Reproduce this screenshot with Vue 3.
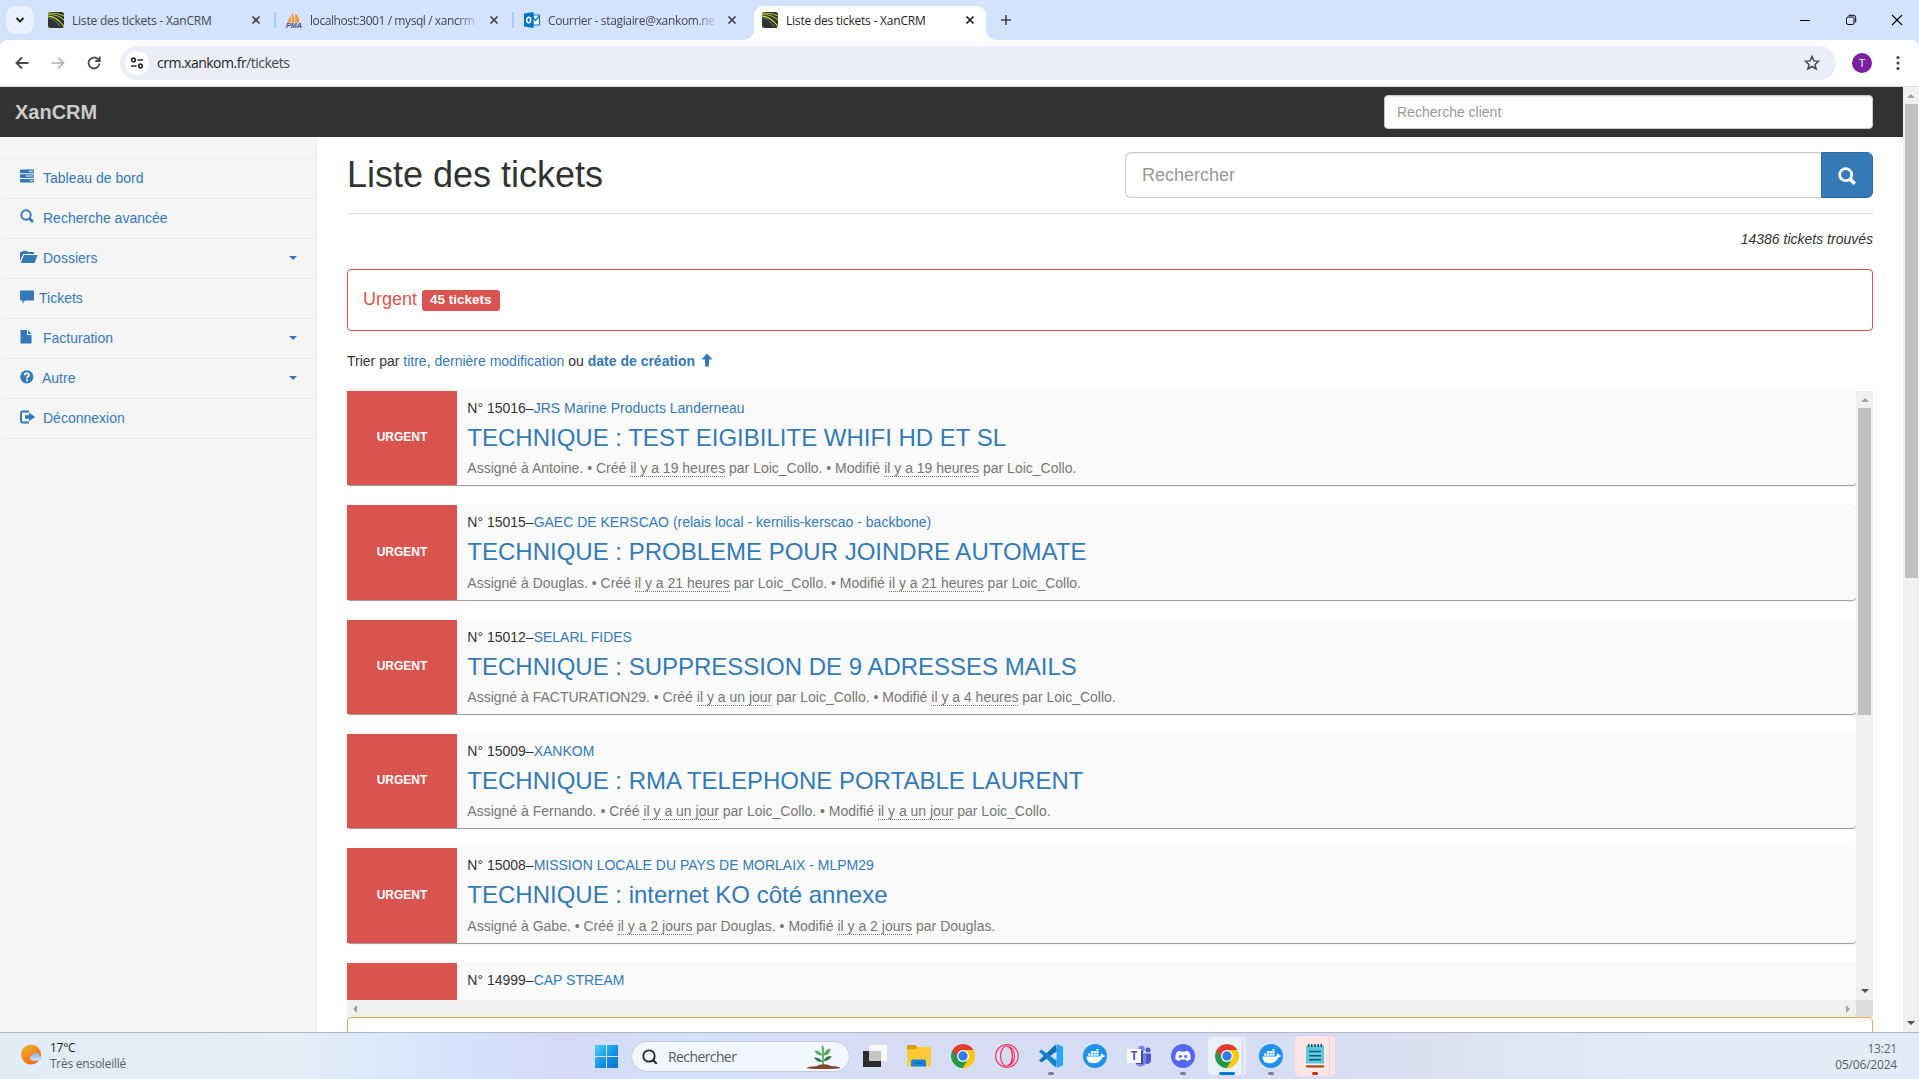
<script setup>
const tabs = [
  { title: 'Liste des tickets - XanCRM', icon: 'xan', active: false },
  { title: 'localhost:3001 / mysql / xancrm', icon: 'pma', active: false },
  { title: 'Courrier - stagiaire@xankom.ne', icon: 'outlook', active: false },
  { title: 'Liste des tickets - XanCRM', icon: 'xan', active: true },
]

const menu = [
  { label: 'Tableau de bord', icon: 'tasks', gap: 43 },
  { label: 'Recherche avancée', icon: 'search', gap: 43 },
  { label: 'Dossiers', icon: 'folder', gap: 43, caret: true },
  { label: 'Tickets', icon: 'comment', gap: 39 },
  { label: 'Facturation', icon: 'file', gap: 43, caret: true },
  { label: 'Autre', icon: 'help', gap: 42, caret: true },
  { label: 'Déconnexion', icon: 'logout', gap: 43 },
]

const tickets = [
  { id: 15016, client: 'JRS Marine Products Landerneau', title: 'TECHNIQUE : TEST EIGIBILITE WHIFI HD ET SL', who: 'Antoine', created: 'il y a 19 heures', by: 'Loic_Collo', modified: 'il y a 19 heures', mby: 'Loic_Collo' },
  { id: 15015, client: 'GAEC DE KERSCAO (relais local - kernilis-kerscao - backbone)', title: 'TECHNIQUE : PROBLEME POUR JOINDRE AUTOMATE', who: 'Douglas', created: 'il y a 21 heures', by: 'Loic_Collo', modified: 'il y a 21 heures', mby: 'Loic_Collo' },
  { id: 15012, client: 'SELARL FIDES', title: 'TECHNIQUE : SUPPRESSION DE 9 ADRESSES MAILS', who: 'FACTURATION29', created: 'il y a un jour', by: 'Loic_Collo', modified: 'il y a 4 heures', mby: 'Loic_Collo' },
  { id: 15009, client: 'XANKOM', title: 'TECHNIQUE : RMA TELEPHONE PORTABLE LAURENT', who: 'Fernando', created: 'il y a un jour', by: 'Loic_Collo', modified: 'il y a un jour', mby: 'Loic_Collo' },
  { id: 15008, client: 'MISSION LOCALE DU PAYS DE MORLAIX - MLPM29', title: 'TECHNIQUE : internet KO côté annexe', who: 'Gabe', created: 'il y a 2 jours', by: 'Douglas', modified: 'il y a 2 jours', mby: 'Douglas' },
  { id: 14999, client: 'CAP STREAM' },
]

const apps = [
  { name: 'view' }, { name: 'files' }, { name: 'chrome' }, { name: 'opera' },
  { name: 'code', state: 'run' }, { name: 'docker' }, { name: 'teams' },
  { name: 'discord', state: 'run' }, { name: 'chrome', state: 'active' },
  { name: 'docker', state: 'run' }, { name: 'notepad', state: 'alert' },
]
</script>

<template>
  <div class="screen">
    <div class="tabstrip">
      <div class="tabsearch">
        <svg width="10" height="8" viewBox="0 0 10 8"><path d="M1.500 2l3.500 3.500L8.500 2" fill="none" stroke="#1f1f1f" stroke-width="1.800" /></svg>
      </div>
      <div class="tabs">
        <div v-for="(t, i) in tabs" :key="i" class="tab" :class="{ active: t.active, sep: i < 2 }">
          <svg v-if="t.icon === 'xan'" width="16" height="16" viewBox="0 0 16 16">
            <rect width="16" height="16" rx="2.500" fill="#303332" />
            <path d="M0 2.500C6 2.500 12 4 16 8M0 1C6 1 12 1.500 16 4" fill="none" stroke="#a9bd35" stroke-width="1.100" />
            <path d="M0 4C7 4.500 12 9 16 14.500" fill="none" stroke="#e0e63a" stroke-width="1.200" />
            <path d="M0 5.500C5 6.500 9 10 12 15" fill="none" stroke="#3f8f8c" stroke-width="1" />
          </svg>
          <svg v-else-if="t.icon === 'pma'" width="16" height="16" viewBox="0 0 16 16">
            <path d="M1 10.500L5.200 3v7.500zM6 10.500V0.500C8 3 8.800 7 8.500 10.500zM9.300 10.500V1.500C12.500 4 13.600 7 13.500 10.500z" fill="#f39a36" />
            <text x="0" y="15.700" font-size="6.500" font-weight="700" font-style="italic" font-family="Liberation Sans, sans-serif" fill="#46477c" textLength="16" lengthAdjust="spacingAndGlyphs">PMA</text>
          </svg>
          <svg v-else width="16" height="16" viewBox="0 0 16 16">
            <path d="M9 3h6.500v10H9z" fill="#fff" stroke="#0072c6" /><path d="M9.500 6l2 2.500L15.500 4" fill="none" stroke="#0072c6" stroke-width="1.300" />
            <path d="M0 1.500L9.500 0v16L0 14.500z" fill="#0072c6" /><ellipse cx="4.700" cy="8" rx="2" ry="2.700" fill="none" stroke="#fff" stroke-width="1.500" />
          </svg>
          <span class="tabtitle">{{ t.title }}</span>
          <svg class="close" width="10" height="10" viewBox="0 0 10 10"><path d="M1.500 1.500l7 7M8.500 1.500l-7 7" stroke="currentColor" stroke-width="1.700" /></svg>
        </div>
      </div>
      <svg class="plus" width="12" height="12" viewBox="0 0 12 12"><path d="M6 1v10M1 6h10" stroke="#474747" stroke-width="1.600" /></svg>
      <div class="winctl">
        <svg width="12" height="12" viewBox="0 0 12 12"><path d="M1 6.500h10" stroke="#000" /></svg>
        <svg width="12" height="12" viewBox="0 0 12 12" fill="none" stroke="#000"><rect x="1.500" y="3" width="7.500" height="7.500" rx="1.500" /><path d="M3.500 1.300H8.500a2.200 2.200 0 0 1 2.200 2.200V8.500" /></svg>
        <svg width="12" height="12" viewBox="0 0 12 12"><path d="M1 1l10 10M11 1L1 11" stroke="#000" stroke-width="1.100" /></svg>
      </div>
    </div>

    <div class="toolbar">
      <div class="navbtns">
        <svg width="16" height="16" viewBox="0 0 16 16" fill="none" stroke="#474747" stroke-width="1.800"><path d="M14.500 8H2.500M8 2.500L2.500 8l5.500 5.500" /></svg>
        <svg width="16" height="16" viewBox="0 0 16 16" fill="none" stroke="#b0b0b0" stroke-width="1.700"><path d="M1.500 8h12M8 2.500l5.500 5.500-5.500 5.500" /></svg>
        <svg width="16" height="16" viewBox="0 0 16 16" fill="none" stroke="#474747" stroke-width="1.800"><path d="M13.500 8.500A5.500 5.500 0 1 1 12 4.200l1.500 1.500M13.700 1.500V6H9.300" /></svg>
      </div>
      <div class="omnibox">
        <div class="siteinfo">
          <svg width="14" height="14" viewBox="0 0 14 14" fill="none" stroke="#2b2b2b" stroke-width="1.700"><circle cx="3.500" cy="4" r="1.800" /><path d="M7.500 4H13M1 10h5.500" /><circle cx="10.500" cy="10" r="1.800" /></svg>
        </div>
        <span class="url">crm.xankom.fr<span class="path">/tickets</span></span>
        <svg class="star" width="16" height="16" viewBox="0 0 16 16"><path d="M8 1.600l1.900 4.300 4.700.4-3.600 3.100 1.100 4.600L8 11.500 3.900 14 5 9.400 1.400 6.300l4.700-.4z" fill="none" stroke="#474747" stroke-width="1.500" /></svg>
      </div>
      <div class="avatar">T</div>
      <svg class="dots" width="4" height="16" viewBox="0 0 4 16" fill="#474747"><circle cx="2" cy="2.500" r="1.600" /><circle cx="2" cy="8" r="1.600" /><circle cx="2" cy="13.500" r="1.600" /></svg>
    </div>

    <div class="viewport">
      <div class="page">
        <header class="navbar">
          <span class="brand">XanCRM</span>
          <div class="clientsearch">Recherche client</div>
        </header>
        <div class="columns">
          <nav class="sidebar">
            <div class="spacer"></div>
            <a v-for="m in menu" :key="m.label" class="item">
              <span class="glyph" :class="m.icon" :style="{ width: m.gap - 20 + 'px' }">
                <svg v-if="m.icon === 'tasks'" width="14" height="14" viewBox="0 0 14 14"><g fill="#337ab7"><rect y="0.500" width="14" height="3.700" rx=".8" /><rect y="5.200" width="14" height="3.700" rx=".8" /><rect y="9.900" width="14" height="3.700" rx=".8" /></g><path d="M9 2.300h4M6 7h7M10 11.700h3" stroke="#f5f5f5" /></svg>
                <svg v-else-if="m.icon === 'search'" width="14" height="14" viewBox="0 0 14 14"><g fill="none" stroke="#337ab7"><circle cx="6" cy="6" r="4.700" stroke-width="1.900" /><path d="M9.500 9.500L13 13" stroke-width="2.700" /></g></svg>
                <svg v-else-if="m.icon === 'folder'" width="18" height="14" viewBox="0 0 18 14"><path d="M0 11V2.300Q0 2 .4 2H2l1-1.300h4L8 2h5.500q.5 0 .5.500V4H3.300z" fill="#337ab7" /><path d="M4 5h13.500L14.700 13H.7z" fill="#337ab7" /></svg>
                <svg v-else-if="m.icon === 'comment'" width="14" height="14" viewBox="0 0 14 14"><path d="M1 .5h12q1 0 1 1v8q0 1-1 1H5L2.500 13.500V10.500H1q-1 0-1-1v-8q0-1 1-1z" fill="#337ab7" /></svg>
                <svg v-else-if="m.icon === 'file'" width="14" height="14" viewBox="0 0 14 14"><path d="M1.500 0H7v5h4.500v8.500H.5V0z" fill="#337ab7" /><path d="M8 0l3.500 4H8z" fill="#337ab7" /></svg>
                <svg v-else-if="m.icon === 'help'" width="14" height="14" viewBox="0 0 14 14"><circle cx="6.800" cy="6.800" r="6.600" fill="#337ab7" /><path d="M4.600 5.200C4.700 2.600 9 2.600 9 5 9 6.700 6.900 6.500 6.900 8.400" fill="none" stroke="#f5f5f5" stroke-width="1.900" /><rect x="5.900" y="9.400" width="2" height="2" fill="#f5f5f5" /></svg>
                <svg v-else width="16" height="14" viewBox="0 0 16 14"><path d="M9 1.500H3Q1 1.500 1 3.500v7q0 2 2 2H9" fill="none" stroke="#337ab7" stroke-width="2" /><path d="M5 5.300h4V2.600L15 7 9 11.300V8.700H5z" fill="#337ab7" /></svg>
              </span>
              <span>{{ m.label }}</span>
              <i v-if="m.caret" class="caret"></i>
            </a>
          </nav>

          <main class="main">
            <div class="head">
              <h1>Liste des tickets</h1>
              <div class="searchgroup">
                <div class="searchinput">Rechercher</div>
                <div class="searchbtn">
                  <svg width="18" height="18" viewBox="0 0 14 14" fill="none" stroke="#fff"><circle cx="6" cy="6" r="4.700" stroke-width="2.100" /><path d="M9.500 9.500L13 13" stroke-width="2.800" /></svg>
                </div>
              </div>
            </div>
            <div class="found">14386 tickets trouvés</div>
            <div class="panel">Urgent <span class="badge">45 tickets</span></div>
            <div class="sort">Trier par <a>titre</a>, <a>dernière modification</a> ou <a><b>date de création</b></a>
              <svg width="14" height="14" viewBox="0 0 14 14"><path d="M7 .6L12.500 6.600H9v7H5v-7H1.500z" fill="#337ab7" /></svg>
            </div>
            <div class="listbox">
              <div class="listrow">
                <div class="list">
                  <article v-for="t in tickets" :key="t.id" class="ticket">
                    <div class="level"><span v-if="t.title">URGENT</span></div>
                    <div class="body">
                      <div class="ref">N° {{ t.id }}–<a>{{ t.client }}</a></div>
                      <template v-if="t.title">
                        <h3>{{ t.title }}</h3>
                        <div class="meta">Assigné à {{ t.who }}. • Créé <abbr>{{ t.created }}</abbr> par {{ t.by }}. • Modifié <abbr>{{ t.modified }}</abbr> par {{ t.mby }}.</div>
                      </template>
                    </div>
                  </article>
                </div>
                <div class="vbar"><i class="up"></i><div class="thumb inner"></div><i class="down"></i></div>
              </div>
              <div class="hbar"><div class="track"><i class="left"></i><i class="right"></i></div><div class="corner"></div></div>
            </div>
            <div class="panel next"></div>
          </main>
        </div>
      </div>
      <div class="vbar outer"><i class="up"></i><div class="thumb page-thumb"></div><i class="down"></i></div>
    </div>

    <footer class="taskbar">
      <div class="weather">
        <svg width="23" height="22" viewBox="0 0 23 22">
          <defs>
            <linearGradient id="sun" x1="0" y1="0" x2=".6" y2="1"><stop offset="0" stop-color="#efb72a" /><stop offset="1" stop-color="#f2691b" /></linearGradient>
            <linearGradient id="cloud" x1="0" y1="0" x2="0" y2="1"><stop offset="0" stop-color="#8fb2e6" /><stop offset="1" stop-color="#cfe0fa" /></linearGradient>
          </defs>
          <circle cx="10" cy="10.500" r="10" fill="url(#sun)" />
          <path d="M11 16.700a2.900 2.900 0 0 1 .2-5.600 4 4 0 0 1 7.300.6 2.600 2.600 0 0 1 .8 5z" fill="url(#cloud)" />
        </svg>
        <div class="wtext"><span>17°C</span><small>Très ensoleillé</small></div>
      </div>
      <div class="center">
        <svg class="start" width="23" height="23" viewBox="0 0 23 23">
          <defs><linearGradient id="win" x1="0" y1="0" x2="1" y2="1"><stop offset="0" stop-color="#4fd0fc" /><stop offset=".6" stop-color="#0f8ee0" /><stop offset="1" stop-color="#0573cf" /></linearGradient></defs>
          <path d="M0 0h11v11H0zM12 0h11v11H12zM0 12h11v11H0zM12 12h11v11H12z" fill="url(#win)" />
        </svg>
        <div class="pill">
          <svg width="16" height="16" viewBox="0 0 16 16" fill="none" stroke="#222"><circle cx="7" cy="7" r="5.700" stroke-width="1.800" /><path d="M11 11l3.700 3.700" stroke-width="2" /></svg>
          <span>Rechercher</span>
          <svg class="plant" width="36" height="25" viewBox="0 0 36 25">
            <path d="M1 24Q5 22 11 22.300 15 20 19 20.200 23 20 26 22 33 22 35.500 24 33 25 18 25 4 25 1 24z" fill="#7d4a31" />
            <path d="M18 21V5" stroke="#3f8d43" stroke-width="1.400" />
            <g fill="#5aab5e"><path d="M18 8Q15.500 4.500 17.500 1q2.500 3 .5 7z" /><path d="M17.500 11.500Q11 11.500 9.500 6.500q6 0 8 5z" /><path d="M18.500 11.500q1-6 7-7 0 6.500-7 7z" /></g>
            <g fill="#2f7d4b"><path d="M17.500 18Q11 18 9 13.500q6-.5 8.500 4.500z" /><path d="M18.500 17q2-5.500 8-5-2 5.500-8 5z" /></g>
          </svg>
        </div>
        <div class="apps">
          <div v-for="(a, i) in apps" :key="i" class="app" :class="a.state">
            <svg v-if="a.name === 'view'" width="24" height="24" viewBox="0 0 24 24">
              <rect x="0" y="7" width="18" height="16" fill="#2c2c2c" /><rect x="6" y="1" width="18" height="16" fill="#f8f8f8" /><rect x="6" y="7" width="12" height="10" fill="#c6c6c6" />
            </svg>
            <svg v-else-if="a.name === 'files'" width="24" height="24" viewBox="0 0 24 24">
              <path d="M0 6V2.500Q0 1 1.500 1H8l2.500 2.500V6z" fill="#dc9c0c" /><path d="M0 5.500h8.500l2-2.500H23q1 0 1 1v17.500q0 1-1 1H1q-1 0-1-1z" fill="#fdc937" />
              <path d="M4 22.500V17.500Q4 15.500 6 15.500H17q2 0 2 2v5z" fill="#1486d8" /><path d="M8 19h7.500" stroke="#0a5ea5" stroke-width="1.200" />
            </svg>
            <svg v-else-if="a.name === 'chrome'" width="24" height="24" viewBox="0 0 24 24">
              <path d="M12 12L1.610 6A12 12 0 0 1 22.390 6z" fill="#e33b2e" /><path d="M12 12L22.390 6A12 12 0 0 1 12 24z" fill="#fdc70d" /><path d="M12 12V24A12 12 0 0 1 1.610 6z" fill="#229b48" />
              <path d="M12 6h10.390l-5.200 9z" fill="#fdc70d" /><path d="M6.800 15L1.610 6 12 6z" fill="#e33b2e" /><path d="M17.200 15L12 24l-5.200-9z" fill="#229b48" />
              <path d="M17.200 15L12 24l5-1z" fill="#fdc70d" /><path d="M6.800 15L1.610 6V13z" fill="#229b48" />
              <circle cx="12" cy="12" r="6" fill="#fff" /><circle cx="12" cy="12" r="4.700" fill="#2f7bea" />
            </svg>
            <svg v-else-if="a.name === 'opera'" width="24" height="24" viewBox="0 0 24 24" fill="none" stroke="#f53563" stroke-width="1.200">
              <circle cx="12" cy="12" r="11.300" /><ellipse cx="11.500" cy="12" rx="6" ry="10" /><path d="M12 2.500c5.500 0 7.500 5 7.500 9.500s-2 9.500-7.500 9.500M14 2.500c3 3 3.500 6.500 3.500 9.500s-.5 6.500-3.500 9.500" />
            </svg>
            <svg v-else-if="a.name === 'code'" width="24" height="24" viewBox="0 0 24 24">
              <path d="M18 7L2.500 18.500 0 16.500 16.500 0.500z" fill="#0f6fb5" /><path d="M18 17L2.500 5.500 0 7.500 16.500 23.500z" fill="#1585cc" /><path d="M17.500 0L24 2.700V21.300L17.500 24z" fill="#2aa5f0" />
            </svg>
            <svg v-else-if="a.name === 'docker'" width="24" height="24" viewBox="0 0 24 24">
              <circle cx="12" cy="12" r="12" fill="#1d91ec" /><path d="M3.500 12.500H17q1-.3.800-2.500l1-.8q1.300.8 1.400 2 1.500-.2 2 .5-.8 1.500-2.700 1.500Q17 19.300 10 19.300q-6.500 0-6.500-6.800z" fill="#fff" />
              <path d="M5.200 9.600h2.200v2.200H5.200zM7.900 9.600h2.200v2.200H7.900zM10.600 9.600h2.200v2.200h-2.200zM13.300 9.600h2.200v2.200h-2.200zM7.900 7h2.200v2.100H7.900zM10.600 7h2.200v2.100h-2.200zM13.300 7h2.200v2.100h-2.200zM13.300 5h2.200v1.500h-2.200z" fill="#fff" />
            </svg>
            <svg v-else-if="a.name === 'teams'" width="24" height="24" viewBox="0 0 24 24">
              <circle cx="14.500" cy="5" r="3.300" fill="#7b83eb" /><circle cx="21" cy="6" r="2.500" fill="#5059c9" />
              <path d="M17 9.500h7v6q0 4-3.500 4.500L17 19z" fill="#5059c9" /><path d="M8 9.500H19V16q0 6-5 6.500-5 .1-6-5z" fill="#7b83eb" /><path d="M8 7h8v13H9z" fill="#4149a3" />
              <rect y="5" width="14" height="14" fill="#fff" /><text x="7" y="16" text-anchor="middle" font-size="11.500" font-weight="700" font-family="Open Sans, sans-serif" fill="#4b53bc">T</text>
            </svg>
            <svg v-else-if="a.name === 'discord'" width="24" height="24" viewBox="0 0 24 24">
              <circle cx="12" cy="12" r="12" fill="#5865f2" /><path d="M9.200 6.800Q7 7 5.800 7.900 4.200 11 4.200 15q1.600 1.700 4.100 2l1-1.600h5.400l1 1.600q2.500-.3 4.100-2 0-4-1.600-7.100Q17 7 14.800 6.800l-.6 1H9.800z" fill="#fff" />
              <ellipse cx="9.300" cy="12.400" rx="1.500" ry="1.700" fill="#5865f2" /><ellipse cx="14.700" cy="12.400" rx="1.500" ry="1.700" fill="#5865f2" />
            </svg>
            <svg v-else width="24" height="24" viewBox="0 0 24 24">
              <rect x="3" y="20" width="18" height="3.500" rx="1" fill="#9a4a12" /><rect x="3" y="19" width="18" height="2.300" fill="#f4efe8" /><rect x="3" y="1.500" width="18" height="18" fill="#5cc9e0" />
              <path d="M6 7.500h12M6 11.700h12M6 15.800h12" stroke="#0f5874" stroke-width="1.400" /><path d="M5.700 0v3M8.800 0v3M12 0v3M15.200 0v3M18.300 0v3" stroke="#174b62" stroke-width="1.500" />
            </svg>
          </div>
        </div>
      </div>
      <div class="clock"><span>13:21</span><span>05/06/2024</span></div>
    </footer>
  </div>
</template>

<style>
body { overflow: hidden; background: #fff; }
</style>

<style scoped>
* { box-sizing: border-box; }
svg { display: block; flex: none; }
.screen { width: 1919px; height: 1079px; display: flex; flex-direction: column; overflow: hidden; font: 14px/20px "Liberation Sans", Arial, sans-serif; color: #333; background: #fff; }

.tabstrip { height: 40px; flex: none; display: flex; background: #d3e2fd; font-family: "Open Sans", "Noto Sans", sans-serif; }
.tabsearch { width: 28px; height: 28px; margin: 6px 6px 0; border-radius: 9px; background: #e9f0fe; display: flex; align-items: center; justify-content: center; }
.tabs { display: flex; }
.tab { position: relative; width: 238px; height: 34px; margin-top: 6px; padding: 0 17px 6px 8px; display: flex; align-items: center; color: #45484d; }
.tab.sep::after { content: ""; position: absolute; right: 2px; top: 6px; width: 2px; height: 16px; background: #a8c7fa; }
.tabtitle { flex: 1; margin: 1px 6px 0 8px; font-size: 12px; letter-spacing: -0.21px; white-space: nowrap; }
.tab:nth-child(2) .tabtitle, .tab:nth-child(3) .tabtitle { letter-spacing: -0.42px; -webkit-mask-image: linear-gradient(90deg, #000 147px, transparent 170px); mask-image: linear-gradient(90deg, #000 147px, transparent 170px); }
.tab:nth-child(3) .tabtitle { letter-spacing: -0.35px; }
.close { color: #3c3f43; }
.tab.active { background: #fff; border-radius: 9px 9px 0 0; width: 232px; padding-right: 11px; color: #1f1f1f; }
.tab.active .close { color: #1f1f1f; }
.tab.active::before, .tab.active::after { content: ""; position: absolute; bottom: 0; width: 10px; height: 10px; }
.tab.active::before { left: -10px; background: radial-gradient(circle at 0 0, transparent 9.5px, #fff 10px); }
.tab.active::after { right: -10px; background: radial-gradient(circle at 100% 0, transparent 9.5px, #fff 10px); }
.plus { margin: 14px 0 0 14px; }
.winctl { margin-left: auto; margin-right: 16px; display: flex; gap: 34px; padding-top: 14px; }

.toolbar { height: 47px; flex: none; display: flex; align-items: center; border-bottom: 1px solid #dcdcde; background: radial-gradient(circle at 8px 8px, #fff 8px, #d3e2fd 8.500px) 0 0 / 8px 8px no-repeat, radial-gradient(circle at 0 8px, #fff 8px, #d3e2fd 8.500px) 100% 0 / 8px 8px no-repeat, #fff; }
.navbtns { display: flex; gap: 20px; padding-left: 14px; width: 120px; }
.omnibox { width: 1716px; height: 34px; border-radius: 17px; background: #ebeef8; display: flex; align-items: center; padding: 0 16px 0 5px; }
.siteinfo { width: 24px; height: 24px; border-radius: 50%; background: #fff; display: flex; align-items: center; justify-content: center; }
.url { flex: 1; margin-left: 8px; font: 14px/20px "Open Sans", "Noto Sans", sans-serif; letter-spacing: -0.5px; color: #1f1f1f; }
.path { color: #474747; }
.avatar { width: 20px; height: 20px; margin-left: 16px; border-radius: 50%; background: #7b1fa2; color: #fff; font: 11px/20px "Open Sans", sans-serif; text-align: center; }
.dots { margin-left: 24px; }

.viewport { height: 945px; flex: none; display: flex; overflow: hidden; }
.page { width: 1903px; height: 945px; overflow: hidden; display: flex; flex-direction: column; }
.navbar { height: 50px; flex: none; background: #333; display: flex; justify-content: space-between; padding: 8px 30px 0 15px; }
.brand { font-size: 20px; line-height: 34px; font-weight: 700; color: #ccc; }
.clientsearch { width: 489px; height: 34px; border: 1px solid #ccc; border-radius: 4px; background: #fff; padding: 6px 12px; color: #999; box-shadow: inset 0 1px 1px rgba(0, 0, 0, .075); }
.columns { display: flex; height: 895px; }
.sidebar { width: 317px; flex: none; background: #f5f5f5; border-right: 1px solid #eee; }
.spacer { height: 22px; }
.spacer::after { content: ""; display: block; height: 21px; border-bottom: 1px solid #eaeaea; }
.item { display: flex; align-items: center; height: 40px; padding: 0 20px 1px; border-bottom: 1px solid #e8e8e8; border-radius: 0 0 4px 4px; color: #337ab7; }
.glyph { flex: none; padding-bottom: 2px; }
.glyph.tasks, .glyph.search { padding-bottom: 4px; }
.caret { margin-left: auto; margin-right: -1px; border-top: 4px solid #337ab7; border-left: 4px solid transparent; border-right: 4px solid transparent; }
a { color: #337ab7; }

.main { width: 1586px; padding: 0 30px; }
.head { height: 77px; display: flex; justify-content: space-between; border-bottom: 1px solid #ddd; padding-top: 15px; }
h1 { margin: 3px 0 0; font-size: 36px; line-height: 40px; font-weight: 400; }
.searchgroup { display: flex; width: 748px; height: 46px; }
.searchinput { flex: 1; border: 1px solid #ccc; border-right: 0; border-radius: 6px 0 0 6px; padding: 10px 16px; font-size: 18px; line-height: 24px; color: #999; box-shadow: inset 0 1px 1px rgba(0, 0, 0, .075); }
.searchbtn { width: 52px; border: 1px solid #2e6da4; background: #337ab7; border-radius: 0 6px 6px 0; display: flex; align-items: center; justify-content: center; padding-top: 2px; }
.found { text-align: right; font-style: italic; margin-top: 15px; height: 20px; }
.panel { margin-top: 20px; height: 62px; border: 1px solid #d9534f; border-radius: 4px; padding: 19px 15px; font-size: 18px; line-height: 20px; color: #d9534f; }
.badge { display: inline-block; font-size: 13.5px; line-height: 13.5px; font-weight: 700; color: #fff; background: #d9534f; border-radius: 3px; padding: 3px 8px 4px; margin: -2px 0; vertical-align: 1px; }
.sort { display: flex; margin-top: 20px; height: 20px; white-space: pre; }
.sort svg { margin: 2px 0 0 5px; }
.listbox { margin-top: 20px; height: 626px; }
.listrow { display: flex; height: 609px; }
.list { width: 1509px; overflow: hidden; height: 609px; }
.ticket { display: flex; height: 95.35px; margin-bottom: 19px; background: #fafafa; border-radius: 4px; padding-top: 1px; box-shadow: 0 1px 1px rgba(0, 0, 0, .42); }
.ticket:first-child { margin-top: -1px; }
.level { width: 110px; background: #d9534f; color: #fff; font-weight: 700; font-size: 12px; display: flex; align-items: center; justify-content: center; padding-bottom: 1.6px; }
.body { padding: 7px 0 0 10.300px; white-space: nowrap; }
h3 { margin: 7px 0; font-size: 24px; line-height: 26.4px; font-weight: 400; color: #337ab7; }
.meta { color: #777; }
abbr { border-bottom: 1px dotted #777; }

.vbar { width: 17px; background: #f0f0f0; display: flex; flex-direction: column; align-items: center; }
.vbar i { width: 0; height: 0; border: 4px solid transparent; }
.vbar .up { border-width: 0 4px 4px; border-bottom-color: #a3a3a3; margin: 7px 0 6px; }
.vbar .down { border-width: 4px 4px 0; border-top-color: #505050; margin: auto 0 7px; }
.thumb { width: 13px; background: #c1c1c1; }
.inner { height: 307px; }
.page-thumb { height: 474px; }
.vbar.outer { width: 16px; }
.hbar { display: flex; height: 17px; }
.track { width: 1509px; background: #f0f0f0; display: flex; align-items: center; justify-content: space-between; padding: 0 6px; }
.left { border: 4px solid transparent; border-left: 0; border-right-color: #a3a3a3; }
.right { border: 4px solid transparent; border-right: 0; border-left-color: #a3a3a3; }
.corner { width: 17px; background: #dcdcdc; }
.next { margin-top: 0; border-color: #f0ad4e; }

.taskbar { height: 47px; flex: none; display: flex; justify-content: space-between; border-top: 1px solid #b0b7c4; font-family: "Open Sans", "Noto Sans", sans-serif; background: linear-gradient(90deg, #e0edf7 0, #e2eef8 300px, #d5e3fb 460px, #d4daf4 560px, #d4e1fa 690px, #d6ddf3 900px, #d5ddf4 1200px, #d7def0 1350px, #dce5f3 1500px, #e0ecf8 1650px, #e0edf9 100%); }
.weather { display: flex; width: 595px; padding: 11px 0 0 21px; }
.wtext { margin-left: 6px; margin-top: -4px; display: flex; flex-direction: column; font-size: 12px; line-height: 16px; color: #1b1b1b; letter-spacing: -0.25px; }
.wtext small { font-size: 12px; color: #5b6068; }
.center { display: flex; flex: 1; }
.start { margin-top: 12px; }
.pill { width: 219px; height: 31px; margin: 8px 3px 0 13px; border-radius: 16px; background: #f2f6fd; border: 1px solid #c3cde2; display: flex; align-items: center; padding: 0 8px 0 10px; font-size: 14px; color: #55585e; }
.pill span { flex: 1; margin-left: 10px; letter-spacing: -0.6px; }
.apps { display: flex; }
.app { position: relative; width: 44px; height: 46px; display: flex; justify-content: center; padding-top: 11px; }
.app svg { position: relative; }
.app.run::after, .app.active::after, .app.alert::after { content: ""; position: absolute; left: 19px; top: 39px; width: 6px; height: 3px; border-radius: 2px; background: #7b8088; }
.app.active::after { left: 14px; width: 16px; background: #0078d4; }
.app.alert::after { background: #c42b1c; }
.app.active::before, .app.alert::before { content: ""; position: absolute; left: 3px; top: 4px; width: 34px; height: 38px; border-radius: 4px; background: #ebf1fb; box-shadow: 1px 0 #c9d2e6, 4px 0 #e6edf9; }
.app.alert::before { left: 2px; top: 3px; height: 40px; background: #fde4e5; box-shadow: 1px 0 #f0d3d9, 6px 0 #fae1e4; }
.clock { padding: 8px 22px 0 0; display: flex; flex-direction: column; text-align: right; font-size: 12px; line-height: 16px; color: #5b6068; letter-spacing: -0.2px; }
</style>
